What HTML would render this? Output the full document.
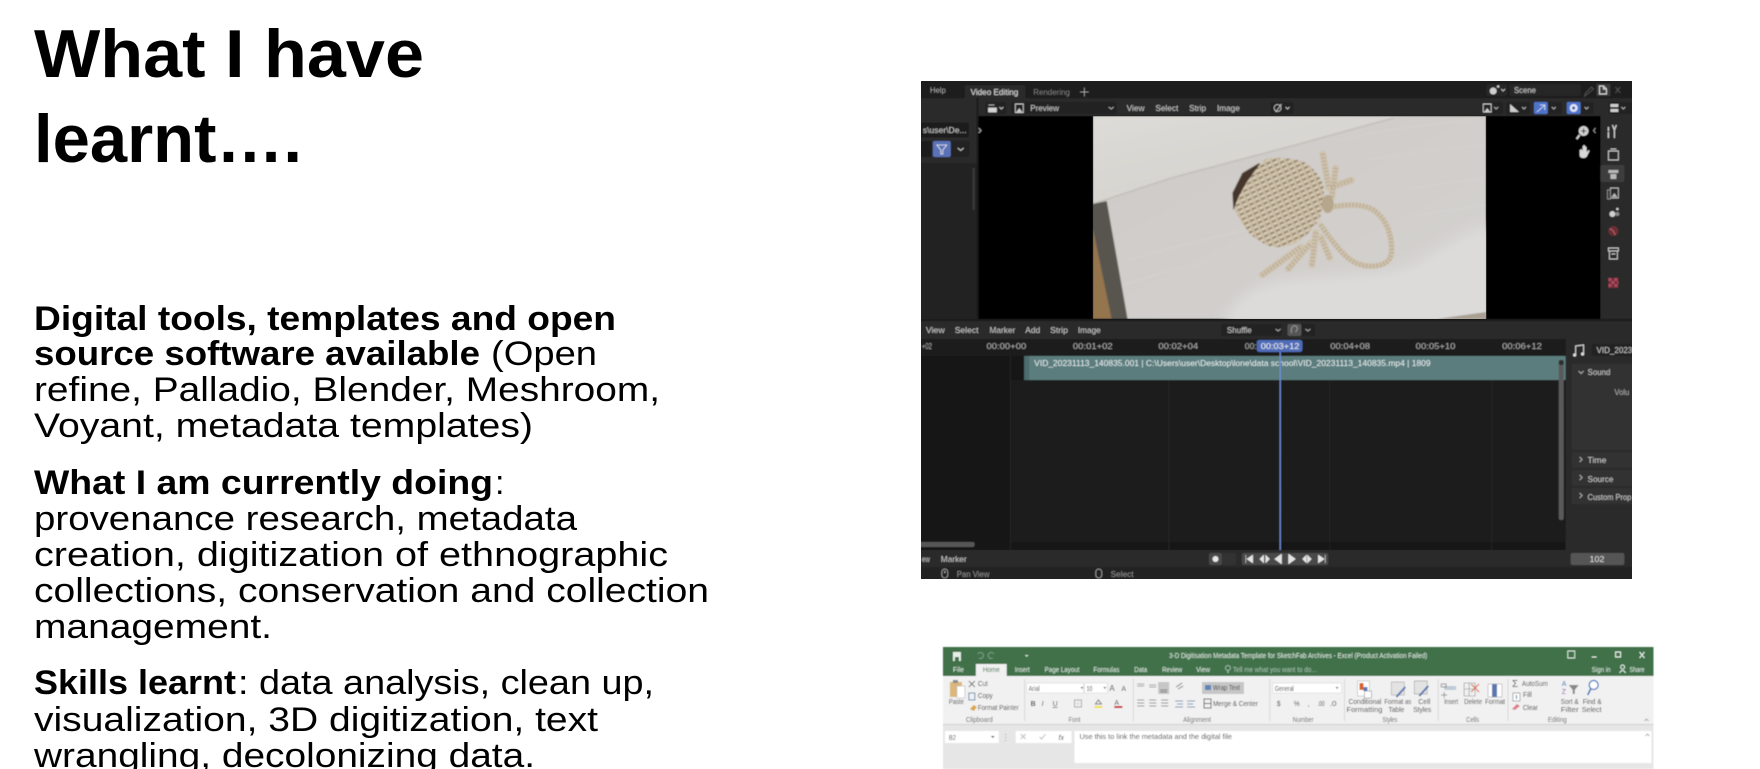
<!DOCTYPE html>
<html><head><meta charset="utf-8"><title>What I have learnt</title>
<style>
html,body{margin:0;padding:0;background:#fff;width:1760px;height:769px;overflow:hidden}
svg{display:block}
text{font-family:"Liberation Sans",sans-serif}
.t{font-size:68px;font-weight:700;fill:#000}
.b{font-size:34px;font-weight:700;fill:#000}
.r{font-size:34px;fill:#000}
.u{font-size:8.5px;fill:#c8c8c8}
.e{font-size:7px;fill:#444}
.g{font-size:7px;fill:#e2ece4}
</style></head><body>
<svg width="1760" height="769" viewBox="0 0 1760 769" xmlns="http://www.w3.org/2000/svg">
<defs>
<filter id="bl" x="-5%" y="-5%" width="110%" height="110%"><feGaussianBlur stdDeviation="0.5"/></filter>
<filter id="bl2" x="-5%" y="-5%" width="110%" height="110%"><feGaussianBlur stdDeviation="0.7"/></filter>
<filter id="bl3" x="-10%" y="-10%" width="120%" height="120%"><feGaussianBlur stdDeviation="6"/></filter>
<pattern id="wv" width="6.500" height="5" patternUnits="userSpaceOnUse" patternTransform="rotate(-25)">
<rect width="6.500" height="5" fill="#cbbda5"/><path d="M0 4.200h4.500" stroke="#7a6950" stroke-width="1.300"/><path d="M1.500 1.500h3" stroke="#ded3bf" stroke-width="1.200"/></pattern>
<linearGradient id="up" x1="0" y1="0" x2="1" y2="1"><stop offset="0" stop-color="#dcdbd7"/><stop offset=".6" stop-color="#d5d3ce"/><stop offset="1" stop-color="#cbc9c4"/></linearGradient>
<linearGradient id="lo" x1="0" y1="0" x2="1" y2="1"><stop offset="0" stop-color="#cdcac7"/><stop offset=".6" stop-color="#d1cecb"/><stop offset="1" stop-color="#d6d4d2"/></linearGradient>
<clipPath id="cb"><rect x="921" y="81" width="711" height="498"/></clipPath>
<clipPath id="cph"><rect x="1094" y="116" width="396" height="203"/></clipPath>
</defs>

<!-- Slide text -->
<text class="t" x="34" y="77" textLength="390" lengthAdjust="spacingAndGlyphs">What I have</text>
<text class="t" x="34" y="162" textLength="268" lengthAdjust="spacingAndGlyphs">learnt….</text>

<text class="b" x="34" y="330" textLength="582" lengthAdjust="spacingAndGlyphs">Digital tools, templates and open</text>
<text class="b" x="34" y="365" textLength="446" lengthAdjust="spacingAndGlyphs">source software available</text>
<text class="r" x="491" y="365" textLength="106" lengthAdjust="spacingAndGlyphs">(Open</text>
<text class="r" x="34" y="401" textLength="626" lengthAdjust="spacingAndGlyphs">refine, Palladio, Blender, Meshroom,</text>
<text class="r" x="34" y="437" textLength="499" lengthAdjust="spacingAndGlyphs">Voyant, metadata templates)</text>

<text class="b" x="34" y="494" textLength="459" lengthAdjust="spacingAndGlyphs">What I am currently doing</text>
<text class="r" x="495" y="494">:</text>
<text class="r" x="34" y="530" textLength="543" lengthAdjust="spacingAndGlyphs">provenance research, metadata</text>
<text class="r" x="34" y="566" textLength="634" lengthAdjust="spacingAndGlyphs">creation, digitization of ethnographic</text>
<text class="r" x="34" y="602" textLength="675" lengthAdjust="spacingAndGlyphs">collections, conservation and collection</text>
<text class="r" x="34" y="638" textLength="238" lengthAdjust="spacingAndGlyphs">management.</text>

<text class="b" x="34" y="694" textLength="202" lengthAdjust="spacingAndGlyphs">Skills learnt</text>
<text class="r" x="238" y="694" textLength="416" lengthAdjust="spacingAndGlyphs">: data analysis, clean up,</text>
<text class="r" x="34" y="731" textLength="564" lengthAdjust="spacingAndGlyphs">visualization, 3D digitization, text</text>
<text class="r" x="34" y="767" textLength="501" lengthAdjust="spacingAndGlyphs">wrangling, decolonizing data.</text>

<!-- Blender screenshot -->
<g clip-path="url(#cb)">
<rect x="921" y="81" width="711" height="498" fill="#1d1d1d"/>
<g transform="translate(5.915 0) scale(.9935 1)">
<g filter="url(#bl)">
<!-- top bar -->
<text class="u" x="930" y="93" textLength="16" lengthAdjust="spacingAndGlyphs">Help</text>
<path d="M965 98V87a2 2 0 0 1 2-2h57a2 2 0 0 1 2 2v11z" fill="#2b2b2b"/>
<text class="u" x="971" y="95" textLength="48" lengthAdjust="spacingAndGlyphs" style="fill:#e2e2e2">Video Editing</text>
<text class="u" x="1034" y="95" textLength="37" lengthAdjust="spacingAndGlyphs" style="fill:#8f8f8f">Rendering</text>
<path d="M1081 92h9M1085.500 87.500v9" stroke="#b0b0b0" stroke-width="1"/>
<rect x="1490" y="84" width="21" height="12" rx="2" fill="#282828"/>
<circle cx="1497" cy="91" r="3.500" fill="#cfcfcf"/><circle cx="1502" cy="86.500" r="1.300" fill="#cfcfcf"/><path d="M1505 89l2 2 2-2" stroke="#bbb" fill="none"/>
<rect x="1513" y="84" width="72" height="12" rx="2" fill="#282828"/>
<text class="u" x="1518" y="93" textLength="22" lengthAdjust="spacingAndGlyphs">Scene</text>
<path d="M1590 93l6-6 2 2-6 5-3 2z" fill="none" stroke="#555"/>
<rect x="1601" y="84" width="14" height="12" fill="#3c3c3c"/>
<path d="M1604 86h4l3 3v5h-7zM1608 86v3h3" stroke="#ddd" fill="none"/>
<path d="M1620 87l5 6m0-6l-5 6" stroke="#555"/>

<!-- left panel -->
<rect x="915" y="98" width="62" height="221" fill="#232323"/>
<path d="M915 98h60a2 2 0 0 1 2 2v63h-62z" fill="#2b2b2b"/>
<rect x="915" y="122" width="55" height="16" rx="2" fill="#1f1f1f" stroke="#353535" stroke-width=".5"/>
<text class="u" x="923" y="133" textLength="44" lengthAdjust="spacingAndGlyphs">s\user\De...</text>
<rect x="915" y="141" width="17" height="16" rx="2" fill="#1f1f1f"/>
<rect x="933" y="141" width="37" height="16" rx="2" fill="#242424"/>
<rect x="933" y="141" width="18" height="16" rx="2" fill="#5a72b8"/>
<path d="M937 145h10l-4 5v4h-2v-4z" fill="none" stroke="#e8e8e8" stroke-width=".8"/>
<path d="M958 148l3 2.500 3-2.500" stroke="#c8c8c8" fill="none"/>
<rect x="973" y="168" width="2" height="42" fill="#3a3a3a"/>

<!-- preview header and view -->
<rect x="979" y="98" width="665" height="18" fill="#2b2b2b"/>
<rect x="979" y="116" width="626" height="203" fill="#000"/>
<path d="M979 128l2.500 2.500-2.500 2.500" stroke="#aaa" fill="none"/>
<rect x="986" y="102" width="21" height="12" rx="2" fill="#242424"/>
<path d="M989 105h6M989 108h8v4h-8z" stroke="#d4d4d4" fill="#d4d4d4" stroke-width=".8"/><path d="M1000 107l2 2 2-2" stroke="#bbb" fill="none"/>
<rect x="1012" y="102" width="106" height="12" rx="2" fill="#242424"/>
<rect x="1016" y="104" width="8" height="8.500" fill="none" stroke="#c8c8c8"/><path d="M1017 112l3-4 3 4z" fill="#c8c8c8"/>
<text class="u" x="1031" y="111" textLength="29" lengthAdjust="spacingAndGlyphs">Preview</text>
<path d="M1110 107l2.500 2 2.500-2" stroke="#aaa" fill="none"/>
<text class="u" x="1128" y="111" textLength="18" lengthAdjust="spacingAndGlyphs">View</text>
<text class="u" x="1157" y="111" textLength="23" lengthAdjust="spacingAndGlyphs">Select</text>
<text class="u" x="1191" y="111" textLength="17" lengthAdjust="spacingAndGlyphs">Strip</text>
<text class="u" x="1219" y="111" textLength="23" lengthAdjust="spacingAndGlyphs">Image</text>
<rect x="1273" y="102" width="23" height="12" rx="2" fill="#242424"/>
<circle cx="1280" cy="108" r="3.500" fill="none" stroke="#ccc" stroke-width=".8"/><path d="M1284 104l-6 8" stroke="#ccc" stroke-width=".8"/><path d="M1288 107l2 2 2-2" stroke="#bbb" fill="none"/>

<rect x="1485" y="102" width="22" height="12" rx="2" fill="#242424"/>
<rect x="1487" y="104" width="8" height="8" fill="none" stroke="#ccc"/><path d="M1488 112l3-4 3 4z" fill="#ccc"/><path d="M1498 107l2 2 2-2" stroke="#aaa" fill="none"/>
<rect x="1510" y="102" width="24" height="12" rx="2" fill="#242424"/>
<path d="M1514 104h9v8h-9z" fill="#cfcfcf"/><path d="M1514 104l9 8v-8z" fill="#222"/><path d="M1526 107l2 2 2-2" stroke="#aaa" fill="none"/>
<rect x="1538" y="102" width="28" height="12" rx="2" fill="#242424"/>
<rect x="1538" y="102" width="14" height="12" rx="1.500" fill="#4f73c9"/>
<path d="M1541 112l8-7M1544 105h5v5" stroke="#dfe6f7" fill="none" stroke-width=".8"/><path d="M1556 107l2 2 2-2" stroke="#aaa" fill="none"/>
<rect x="1571" y="102" width="27" height="12" rx="2" fill="#242424"/>
<rect x="1571" y="102" width="14" height="12" rx="1.500" fill="#4f73c9"/>
<circle cx="1578" cy="108" r="4" fill="#dfe6f7"/><circle cx="1578" cy="108" r="1.500" fill="#3c57a0"/><path d="M1589 107l2 2 2-2" stroke="#aaa" fill="none"/>
<rect x="1613" y="102" width="24" height="12" rx="2" fill="#242424"/>
<path d="M1615 104h8v3h-8zM1615 109h8v3h-8z" fill="#d0d0d0"/><path d="M1626 107l2 2 2-2" stroke="#aaa" fill="none"/>

<!-- right tool column -->
<rect x="1605" y="116" width="40" height="203" fill="#2b2b2b"/>
<rect x="1605" y="165" width="24" height="17" rx="2" fill="#3d3d3d"/>
<path d="M1613 127v4m0 1v6" stroke="#cfcfcf" stroke-width="1.500"/><path d="M1617 125l2 5 2-5M1619 130v8" stroke="#cfcfcf" stroke-width="1.300" fill="none"/>
<rect x="1613" y="151" width="10" height="9" fill="none" stroke="#c8c8c8"/><path d="M1615 149h6" stroke="#c8c8c8"/>
<path d="M1613 170h10v3h-10zM1615 174h6v5h-6z" fill="#b8b8b8"/>
<rect x="1615" y="188" width="8" height="10" fill="none" stroke="#b8b8b8"/><rect x="1612" y="190" width="3" height="9" fill="none" stroke="#888"/><path d="M1616 197l3-4 3 4z" fill="#b8b8b8"/>
<circle cx="1617" cy="214" r="3" fill="#cfcfcf"/><circle cx="1622" cy="209" r="1.300" fill="#cfcfcf"/><circle cx="1622" cy="214" r="2" fill="#888"/>
<circle cx="1618" cy="231" r="5" fill="#6c2f34"/><path d="M1614 229c3 0 4 2 6 6" stroke="#b0656a" fill="none"/>
<rect x="1613" y="248" width="10" height="3" fill="none" stroke="#c8c8c8"/><rect x="1614" y="251" width="8" height="8" fill="none" stroke="#c8c8c8"/><path d="M1616 254h4" stroke="#c8c8c8"/>
<rect x="1613" y="278" width="10" height="10" fill="#6c2f3c"/><path d="M1613 278h3v3h-3zM1619 278h3v3h-3zM1616 281h3v3h-3zM1622 281h1v3h-1zM1613 284h3v3h-3zM1619 284h3v3h-3z" fill="#b04a5c"/>
<!-- gizmo -->
<circle cx="1588" cy="131" r="5" fill="#d0d0d0"/><path d="M1584 135l-3 4" stroke="#d0d0d0" stroke-width="2"/><path d="M1585.500 131h5M1588 128.500v5" stroke="#222"/>
<path d="M1584 150v5q0 3 4 3 3 0 4-3l2-4-1-1-2 2v-5h-1v4v-5h-1v5v-6h-1v6v-5h-1v5l-1-2z" fill="#d8d8d8"/>
<path d="M1600 128l-2 2.500 2 2.500" stroke="#999" fill="none"/>

<!-- timeline header -->
<rect x="915" y="321" width="730" height="18" fill="#2b2b2b"/>
<text class="u" x="926" y="333" textLength="19" lengthAdjust="spacingAndGlyphs">View</text>
<text class="u" x="955" y="333" textLength="24" lengthAdjust="spacingAndGlyphs">Select</text>
<text class="u" x="990" y="333" textLength="26" lengthAdjust="spacingAndGlyphs">Marker</text>
<text class="u" x="1026" y="333" textLength="15" lengthAdjust="spacingAndGlyphs">Add</text>
<text class="u" x="1051" y="333" textLength="18" lengthAdjust="spacingAndGlyphs">Strip</text>
<text class="u" x="1079" y="333" textLength="23" lengthAdjust="spacingAndGlyphs">Image</text>
<rect x="1223" y="324" width="61" height="12" rx="2" fill="#232323"/>
<text class="u" x="1229" y="333" textLength="25" lengthAdjust="spacingAndGlyphs">Shuffle</text>
<path d="M1278 329l2.500 2 2.500-2" stroke="#aaa" fill="none"/>
<rect x="1290" y="324" width="28" height="12" rx="2" fill="#232323"/>
<rect x="1290" y="324" width="14" height="12" rx="2" fill="#555"/>
<path d="M1294 333c-1-6 2-8 4-7 3 1 2 4 0 6" stroke="#999" fill="none"/><path d="M1308 329l2.500 2 2.500-2" stroke="#aaa" fill="none"/>

<!-- timeline -->
<rect x="915" y="339" width="655" height="211" fill="#191919"/>
<rect x="915" y="339" width="655" height="17" fill="#1c1c1c"/>
<rect x="1011" y="380" width="559" height="27" fill="#1d1d1d"/>
<rect x="1011" y="407" width="559" height="27" fill="#1a1a1a"/>
<rect x="1011" y="434" width="559" height="27" fill="#1d1d1d"/>
<rect x="1011" y="461" width="559" height="27" fill="#1a1a1a"/>
<rect x="1011" y="488" width="559" height="27" fill="#1d1d1d"/>
<rect x="1011" y="515" width="559" height="27" fill="#1b1b1b"/>
<rect x="915" y="356" width="96" height="194" fill="#171717"/>
<path d="M1011 356V550M1170.500 380V550M1332.500 380V550M1495.500 380V550" stroke="#272727"/>
<text class="u" x="922" y="349" textLength="10" lengthAdjust="spacingAndGlyphs" style="fill:#aaa">+02</text>
<text class="u" x="987" y="349" textLength="40" lengthAdjust="spacingAndGlyphs" style="fill:#aaa">00:00+00</text>
<text class="u" x="1074" y="349" textLength="40" lengthAdjust="spacingAndGlyphs" style="fill:#aaa">00:01+02</text>
<text class="u" x="1160" y="349" textLength="40" lengthAdjust="spacingAndGlyphs" style="fill:#aaa">00:02+04</text>
<text class="u" x="1247" y="349" textLength="12" lengthAdjust="spacingAndGlyphs" style="fill:#aaa">00:</text>
<text class="u" x="1333" y="349" textLength="40" lengthAdjust="spacingAndGlyphs" style="fill:#aaa">00:04+08</text>
<text class="u" x="1419" y="349" textLength="40" lengthAdjust="spacingAndGlyphs" style="fill:#aaa">00:05+10</text>
<text class="u" x="1506" y="349" textLength="40" lengthAdjust="spacingAndGlyphs" style="fill:#aaa">00:06+12</text>
<rect x="1025" y="356" width="545" height="24" fill="#5b7d7e"/>
<rect x="1025" y="356" width="5" height="24" fill="#4e6c6d"/>
<text class="u" x="1035" y="366" textLength="399" lengthAdjust="spacingAndGlyphs" style="fill:#e6eeee">VID_20231113_140835.001 | C:\Users\user\Desktop\lone\data school\VID_20231113_140835.mp4 | 1809</text>
<rect x="1563" y="360" width="5" height="160" rx="2" fill="#5a5a5a"/>
<rect x="1563" y="360" width="5" height="5" rx="2" fill="#2f2f2f"/>
<rect x="915" y="542" width="60" height="5" rx="2" fill="#575757"/>
<rect x="1282" y="340" width="1.300" height="210" fill="#6f8fdc"/>
<rect x="1259" y="340" width="46" height="12" rx="2.500" fill="#4f6cb8"/>
<text class="u" x="1263" y="349" textLength="39" lengthAdjust="spacingAndGlyphs" style="fill:#f0f0f0">00:03+12</text>

<!-- sidebar -->
<rect x="1570" y="339" width="75" height="211" fill="#2b2b2b"/>
<path d="M1580 355v-9l8-1v9" stroke="#ddd" fill="none"/><circle cx="1579" cy="355" r="1.600" fill="#ddd"/><circle cx="1587" cy="354" r="1.600" fill="#ddd"/>
<rect x="1596" y="344" width="50" height="12" rx="2" fill="#232323"/>
<text class="u" x="1601" y="353" textLength="36" lengthAdjust="spacingAndGlyphs">VID_2023</text>
<rect x="1576" y="364" width="70" height="86" rx="2" fill="#333"/>
<path d="M1583 371l2.500 2.500 2.500-2.500" stroke="#aaa" fill="none"/>
<text class="u" x="1592" y="375" textLength="23" lengthAdjust="spacingAndGlyphs">Sound</text>
<text class="u" x="1619" y="395" textLength="15" lengthAdjust="spacingAndGlyphs" style="fill:#aaa">Volu</text>
<rect x="1576" y="452" width="70" height="16" rx="2" fill="#333"/>
<rect x="1576" y="470" width="70" height="16" rx="2" fill="#333"/>
<rect x="1576" y="488" width="70" height="16" rx="2" fill="#333"/>
<path d="M1584 457l2.500 2.500-2.500 2.500M1584 475l2.500 2.500-2.500 2.500M1584 493l2.500 2.500-2.500 2.500" stroke="#aaa" fill="none"/>
<text class="u" x="1592" y="463" textLength="19" lengthAdjust="spacingAndGlyphs">Time</text>
<text class="u" x="1592" y="482" textLength="26" lengthAdjust="spacingAndGlyphs">Source</text>
<text class="u" x="1592" y="500" textLength="44" lengthAdjust="spacingAndGlyphs">Custom Prop</text>

<!-- transport -->
<rect x="915" y="550" width="730" height="17" fill="#2b2b2b"/>
<text class="u" x="922" y="562" textLength="8" lengthAdjust="spacingAndGlyphs">ew</text>
<text class="u" x="941" y="562" textLength="26" lengthAdjust="spacingAndGlyphs">Marker</text>
<rect x="1211" y="553" width="13" height="12" rx="2" fill="#484848"/><circle cx="1217.500" cy="559" r="3" fill="#e8e8e8"/>
<rect x="1224" y="553" width="14" height="12" rx="2" fill="#333"/>
<rect x="1244" y="553" width="87" height="12" rx="2" fill="#484848"/>
<path d="M1248 555v8M1255 555v8l-6-4zM1262 559l4-4v8zM1272 559l-4-4v8zM1284 554v10l-7-5zM1291 554v10l7-5zM1305 559l4-4v8zM1314 559l-4-4v8zM1321 555v8l6-4zM1328 555v8" fill="#e4e4e4" stroke="#e4e4e4" stroke-width=".5"/>
<rect x="1575" y="553" width="54" height="12" rx="2" fill="#555"/>
<text class="u" x="1594" y="562" textLength="15" lengthAdjust="spacingAndGlyphs" style="fill:#ddd">102</text>

<!-- status -->
<rect x="915" y="567" width="730" height="12" fill="#242424"/>
<rect x="942" y="569" width="6" height="9" rx="3" fill="none" stroke="#aaa" stroke-width=".8"/><path d="M945 571v2" stroke="#ccc"/>
<text class="u" x="957" y="577" textLength="33" lengthAdjust="spacingAndGlyphs" style="fill:#8c8c8c">Pan View</text>
<rect x="1097" y="569" width="6" height="9" rx="3" fill="none" stroke="#aaa" stroke-width=".8"/>
<text class="u" x="1112" y="577" textLength="23" lengthAdjust="spacingAndGlyphs" style="fill:#8c8c8c">Select</text>
</g>

<!-- photo -->
<g clip-path="url(#cph)">
<g filter="url(#bl2)">
<rect x="1094" y="116" width="396" height="203" fill="url(#lo)"/>
<path d="M1226 319C1240 295 1262 280 1300 278 1350 274 1400 275 1420 262 1450 245 1470 230 1495 224V325H1226Z" fill="#dcdbda" filter="url(#bl3)"/>
<path d="M1094 116H1490L1397 117 1287 147 1173 177 1094 203Z" fill="url(#up)"/>
<path d="M1094 204L1173 178 1287 148 1397 118" stroke="#bebbb6" stroke-width="1" fill="none"/>
<path d="M1094 204L1108 201 1129 319H1094Z" fill="#58554f"/>
<path d="M1094 228L1113 319H1094Z" fill="#94754e"/>
<path d="M1440 319L1490 312V319Z" fill="#a99f92"/>
<g stroke="#d8d6d4" stroke-width="1.500" fill="none" opacity=".45">
<path d="M1130 260q60-18 120-30M1125 285q60-20 100-25M1340 140q70-15 140-20M1370 160q60-10 120-15M1400 190l90-12M1420 215l70-10"/>
</g>
<!-- basket -->
<g transform="translate(1.500 0)">
<path d="M1260 163L1243 173 1233 193 1234 210 1247 190 1262 166Z" fill="#45362a"/>
<path d="M1273 158C1290 158 1304 160 1310 165 1320 174 1325 182 1325 190 1325 204 1323 214 1320 220 1312 232 1304 238 1297 243 1288 247 1280 247 1273 247 1262 243 1255 238 1250 233 1243 224 1238 216 1235 208 1238 198 1243 190 1247 183 1252 176 1256 170 1260 165 1264 160 1268 158 1273 158Z" fill="url(#wv)"/>
<g fill="none" stroke-linecap="round">
<g stroke="#cfc3ae" stroke-width="6.500">
<path d="M1324 154L1330 188M1337 168L1333 197M1353 180L1330 188"/>
<path d="M1263 275L1302 247M1289 269L1312 243M1313 265L1317 232M1331 258L1322 237"/>
</g>
<path d="M1333 207C1350 204 1365 204 1375 210 1386 218 1392 230 1393 244 1394 256 1392 262 1382 265 1365 269 1352 262 1343 252 1334 242 1328 234 1322 225" stroke="#cfc3ae" stroke-width="5.500"/>
<g stroke="#96866c" stroke-width="5" stroke-dasharray="1 2.500" stroke-linecap="butt" opacity=".5">
<path d="M1324 154L1330 188M1337 168L1333 197M1353 180L1330 188"/>
<path d="M1263 275L1302 247M1289 269L1312 243M1313 265L1317 232M1331 258L1322 237"/>
<path d="M1333 207C1350 204 1365 204 1375 210 1386 218 1392 230 1393 244 1394 256 1392 262 1382 265 1365 269 1352 262 1343 252 1334 242 1328 234 1322 225"/>
</g>
</g>
<ellipse cx="1329" cy="204" rx="6" ry="9" fill="#b5a68c"/>
</g>
</g>
</g>
</g>
</g>

<!-- Excel screenshot -->
<g filter="url(#bl)" transform="translate(3.255 0) scale(.9965 1)">
<rect x="943" y="647" width="713" height="122" fill="#e6e6e6"/>
<rect x="943" y="647" width="713" height="29" fill="#3f7149"/>
<rect x="953" y="652" width="8" height="9" fill="#e8efe9"/><rect x="955" y="657" width="4" height="4" fill="#3f7149"/>
<path d="M978 654a3 3 0 1 1 1 4M994 654a3 3 0 1 0-1 4" stroke="#7ea086" fill="none"/>
<path d="M1025 655h4l-2 2z" fill="#cde0d2"/>
<text class="g" x="1170" y="658" textLength="259" lengthAdjust="spacingAndGlyphs">3-D Digitisation Metadata Template for SketchFab Archives  -  Excel (Product Activation Failed)</text>
<rect x="1570" y="651" width="7" height="7" fill="none" stroke="#dce8de"/>
<path d="M1594 657h5M1618 652h5v5h-5zM1642 652l5 6m0-6l-5 6" stroke="#eef4ef" fill="none"/>
<rect x="976" y="664" width="31" height="12" fill="#f1f1f1"/>
<text class="g" x="953" y="672" textLength="11" lengthAdjust="spacingAndGlyphs">File</text>
<text class="e" x="983" y="672" textLength="17" lengthAdjust="spacingAndGlyphs" style="fill:#3f7149">Home</text>
<text class="g" x="1015" y="672" textLength="15" lengthAdjust="spacingAndGlyphs">Insert</text>
<text class="g" x="1045" y="672" textLength="35" lengthAdjust="spacingAndGlyphs">Page Layout</text>
<text class="g" x="1094" y="672" textLength="26" lengthAdjust="spacingAndGlyphs">Formulas</text>
<text class="g" x="1135" y="672" textLength="13" lengthAdjust="spacingAndGlyphs">Data</text>
<text class="g" x="1163" y="672" textLength="20" lengthAdjust="spacingAndGlyphs">Review</text>
<text class="g" x="1197" y="672" textLength="14" lengthAdjust="spacingAndGlyphs">View</text>
<circle cx="1229" cy="668" r="2.500" fill="none" stroke="#b9cfbf" stroke-width=".7"/><path d="M1229 671v2" stroke="#b9cfbf"/>
<text class="g" x="1234" y="672" textLength="84" lengthAdjust="spacingAndGlyphs" style="fill:#a9c3b0">Tell me what you want to do...</text>
<text class="g" x="1594" y="672" textLength="19" lengthAdjust="spacingAndGlyphs">Sign in</text>
<circle cx="1625" cy="667" r="2" fill="none" stroke="#e5eee7"/><path d="M1622 673q3-5 6 0" stroke="#e5eee7" fill="none"/>
<text class="g" x="1632" y="672" textLength="15" lengthAdjust="spacingAndGlyphs">Share</text>

<rect x="943" y="676" width="713" height="48" fill="#f1f1f1"/>
<rect x="943" y="724" width="713" height="1" fill="#cfcfcf"/>

<!-- clipboard -->
<rect x="950" y="682" width="12" height="15" fill="#dcb67a"/><rect x="957" y="686" width="8" height="12" fill="#fff" stroke="#aaa" stroke-width=".5"/><rect x="953" y="680" width="5" height="3" fill="#8a8a8a"/>
<text class="e" x="949" y="704" textLength="15" lengthAdjust="spacingAndGlyphs">Paste</text>
<path d="M969 681l6 6m0-6l-6 6" stroke="#777" fill="none"/><rect x="969" y="693" width="6" height="7" fill="none" stroke="#6f8fb5"/><path d="M970 709l4-4 3 2-3 4z" fill="#d9a648"/>
<text class="e" x="978" y="686" textLength="10" lengthAdjust="spacingAndGlyphs">Cut</text>
<text class="e" x="978" y="698" textLength="15" lengthAdjust="spacingAndGlyphs">Copy</text>
<text class="e" x="978" y="710" textLength="41" lengthAdjust="spacingAndGlyphs">Format Painter</text>
<text class="e" x="966" y="722" textLength="27" lengthAdjust="spacingAndGlyphs" style="fill:#666">Clipboard</text>
<path d="M1025 679V721M1134 679V721M1271 679V721M1346 679V721M1440 679V721M1510 679V721" stroke="#d2d2d2" stroke-width=".8"/>
<!-- font -->
<rect x="1027" y="683" width="57" height="10" fill="#fff" stroke="#d0d0d0" stroke-width=".5"/>
<rect x="1085" y="683" width="23" height="10" fill="#fff" stroke="#d0d0d0" stroke-width=".5"/>
<text class="e" x="1029" y="691" textLength="11" lengthAdjust="spacingAndGlyphs">Arial</text>
<text class="e" x="1087" y="691" textLength="6" lengthAdjust="spacingAndGlyphs">10</text>
<path d="M1081 687h3l-1.500 2zM1104 687h3l-1.500 2z" fill="#666"/>
<text class="e" x="1110" y="691" style="font-size:8px">A</text><text class="e" x="1122" y="691" style="font-size:7px">A</text>
<text class="e" x="1031" y="706" style="font-weight:700">B</text><text class="e" x="1042" y="706" style="font-style:italic">I</text><text class="e" x="1053" y="706" style="text-decoration:underline">U</text>
<rect x="1075" y="700" width="7" height="7" fill="none" stroke="#aaa"/><path d="M1078.500 700v7M1075 703.500h7" stroke="#ccc" stroke-width=".5"/>
<rect x="1095" y="706" width="8" height="2" fill="#f2e23c"/><path d="M1096 704l3-4 3 4z" fill="none" stroke="#777"/>
<text class="e" x="1115" y="705" style="font-size:7px">A</text><rect x="1115" y="706" width="8" height="2" fill="#c8161d"/>
<text class="e" x="1069" y="722" textLength="12" lengthAdjust="spacingAndGlyphs" style="fill:#666">Font</text>
<!-- alignment -->
<path d="M1138 684h7M1138 686h7M1150 685h7M1150 687h7" stroke="#888" stroke-width=".7"/>
<rect x="1159" y="682" width="11" height="12" fill="#c6c6c6"/><path d="M1161 690h7M1161 692h7" stroke="#666" stroke-width=".7"/>
<path d="M1177 687l6-4m-4 6l5-3" stroke="#777" fill="none"/>
<rect x="1203" y="682" width="42" height="12" fill="#c6c6c6"/>
<rect x="1206" y="685" width="6" height="5" fill="#5d84b7"/>
<text class="e" x="1214" y="690" textLength="27" lengthAdjust="spacingAndGlyphs">Wrap Text</text>
<path d="M1138 700h7M1138 703h7M1138 706h7M1150 700h7M1150 703h7M1150 706h7M1162 700h7M1162 703h7M1162 706h7" stroke="#777" stroke-width=".8"/>
<path d="M1176 701h8M1178 704h6M1176 707h8M1188 701h8M1188 704h6M1188 707h8" stroke="#5877a8" stroke-width=".8"/>
<rect x="1205" y="699" width="7" height="9" fill="none" stroke="#666"/><path d="M1205 703.500h7" stroke="#666"/>
<text class="e" x="1214" y="706" textLength="45" lengthAdjust="spacingAndGlyphs">Merge &amp; Center</text>
<text class="e" x="1184" y="722" textLength="28" lengthAdjust="spacingAndGlyphs" style="fill:#666">Alignment</text>
<!-- number -->
<rect x="1274" y="683" width="69" height="10" fill="#fff" stroke="#d0d0d0" stroke-width=".5"/>
<text class="e" x="1276" y="691" textLength="19" lengthAdjust="spacingAndGlyphs">General</text>
<path d="M1337 687h3l-1.500 2z" fill="#666"/>
<text class="e" x="1278" y="706">$</text><text class="e" x="1295" y="706" textLength="6" lengthAdjust="spacingAndGlyphs">%</text>
<text class="e" x="1309" y="706">,</text><text class="e" x="1319" y="706" textLength="7" lengthAdjust="spacingAndGlyphs">.00</text><text class="e" x="1331" y="706" textLength="7" lengthAdjust="spacingAndGlyphs">.0</text>
<text class="e" x="1294" y="722" textLength="21" lengthAdjust="spacingAndGlyphs" style="fill:#666">Number</text>
<!-- styles -->
<rect x="1359" y="681" width="12" height="15" fill="#fff" stroke="#aaa" stroke-width=".5"/><rect x="1361" y="683" width="4" height="7" fill="#d9622b"/><rect x="1365" y="687" width="4" height="4" fill="#5878b0"/><rect x="1366" y="691" width="7" height="7" fill="#fff" stroke="#777" stroke-width=".5"/>
<rect x="1393" y="682" width="13" height="13" fill="#e3e3e3" stroke="#999" stroke-width=".5"/><path d="M1398 697l9-10" stroke="#5878b0" stroke-width="2"/>
<rect x="1416" y="681" width="13" height="13" fill="#e3e3e3" stroke="#888" stroke-width=".5"/><path d="M1421 696l9-10" stroke="#5878b0" stroke-width="2"/>
<text class="e" x="1350" y="704" textLength="33" lengthAdjust="spacingAndGlyphs">Conditional</text>
<text class="e" x="1348" y="712" textLength="36" lengthAdjust="spacingAndGlyphs">Formatting</text>
<text class="e" x="1386" y="704" textLength="27" lengthAdjust="spacingAndGlyphs">Format as</text>
<text class="e" x="1390" y="712" textLength="16" lengthAdjust="spacingAndGlyphs">Table</text>
<text class="e" x="1420" y="704" textLength="12" lengthAdjust="spacingAndGlyphs">Cell</text>
<text class="e" x="1415" y="712" textLength="18" lengthAdjust="spacingAndGlyphs">Styles</text>
<text class="e" x="1384" y="722" textLength="15" lengthAdjust="spacingAndGlyphs" style="fill:#666">Styles</text>
<!-- cells -->
<rect x="1446" y="686" width="12" height="4" fill="#c0cbd8"/><path d="M1443 684h5v3h-5zM1446 692v6M1443 695h6" stroke="#777" fill="none" stroke-width=".7"/>
<path d="M1466 683h11v13h-11zM1466 689h11M1471 683v13" stroke="#888" fill="none" stroke-width=".6"/><path d="M1473 684l8 8m0-8l-8 8" stroke="#d9622b"/>
<rect x="1490" y="684" width="14" height="13" fill="#fff" stroke="#999" stroke-width=".5"/><rect x="1494" y="684" width="5" height="13" fill="#5878b0"/>
<text class="e" x="1446" y="704" textLength="14" lengthAdjust="spacingAndGlyphs">Insert</text>
<text class="e" x="1466" y="704" textLength="18" lengthAdjust="spacingAndGlyphs">Delete</text>
<text class="e" x="1487" y="704" textLength="20" lengthAdjust="spacingAndGlyphs">Format</text>
<text class="e" x="1468" y="722" textLength="13" lengthAdjust="spacingAndGlyphs" style="fill:#666">Cells</text>
<!-- editing -->
<text class="e" x="1514" y="687" style="font-size:10px">Σ</text>
<rect x="1515" y="693" width="7" height="8" fill="#fff" stroke="#777" stroke-width=".6"/><path d="M1518.500 695v4" stroke="#2f6cb5"/>
<path d="M1514 709l5-5 3 2-5 4z" fill="#d9808c"/>
<text class="e" x="1524" y="686" textLength="26" lengthAdjust="spacingAndGlyphs">AutoSum</text>
<text class="e" x="1525" y="697" textLength="9" lengthAdjust="spacingAndGlyphs">Fill</text>
<text class="e" x="1525" y="710" textLength="15" lengthAdjust="spacingAndGlyphs">Clear</text>
<text class="e" x="1564" y="686" style="fill:#2f6cb5">A</text><text class="e" x="1564" y="694" style="fill:#7b3fa0">Z</text>
<path d="M1571 685h10l-4 5v4h-2v-4z" fill="#888"/>
<circle cx="1596" cy="685" r="4.500" fill="#fff" stroke="#2f6cb5" stroke-width="1.200"/><path d="M1593 689l-3 6" stroke="#2f6cb5" stroke-width="1.500"/>
<text class="e" x="1563" y="704" textLength="18" lengthAdjust="spacingAndGlyphs">Sort &amp;</text>
<text class="e" x="1563" y="712" textLength="18" lengthAdjust="spacingAndGlyphs">Filter</text>
<text class="e" x="1585" y="704" textLength="19" lengthAdjust="spacingAndGlyphs">Find &amp;</text>
<text class="e" x="1584" y="712" textLength="20" lengthAdjust="spacingAndGlyphs">Select</text>
<text class="e" x="1550" y="722" textLength="19" lengthAdjust="spacingAndGlyphs" style="fill:#666">Editing</text>
<path d="M1647 721l2-2 2 2" stroke="#888" fill="none" stroke-width=".7"/>
<!-- formula bar -->
<rect x="945" y="731" width="54" height="12" fill="#fff"/>
<text class="e" x="949" y="740" textLength="7" lengthAdjust="spacingAndGlyphs">B2</text>
<path d="M991 736h4l-2 2z" fill="#555"/>
<path d="M1006 734v1M1006 737v1M1006 740v1" stroke="#999"/>
<rect x="1016" y="731" width="56" height="12" fill="#fff"/>
<path d="M1021 734l5 5m0-5l-5 5" stroke="#bbb"/><path d="M1040 737l2 2 4-5" stroke="#bbb" fill="none"/>
<text class="e" x="1059" y="740" style="font-style:italic">fx</text>
<rect x="1075" y="731" width="579" height="32" fill="#fff"/>
<text class="e" x="1080" y="739" textLength="153" lengthAdjust="spacingAndGlyphs">Use this to link the metadata and the digital file</text>
<path d="M1648 736l2-2 2 2" stroke="#888" fill="none" stroke-width=".7"/>
</g>
</svg>
</body></html>
